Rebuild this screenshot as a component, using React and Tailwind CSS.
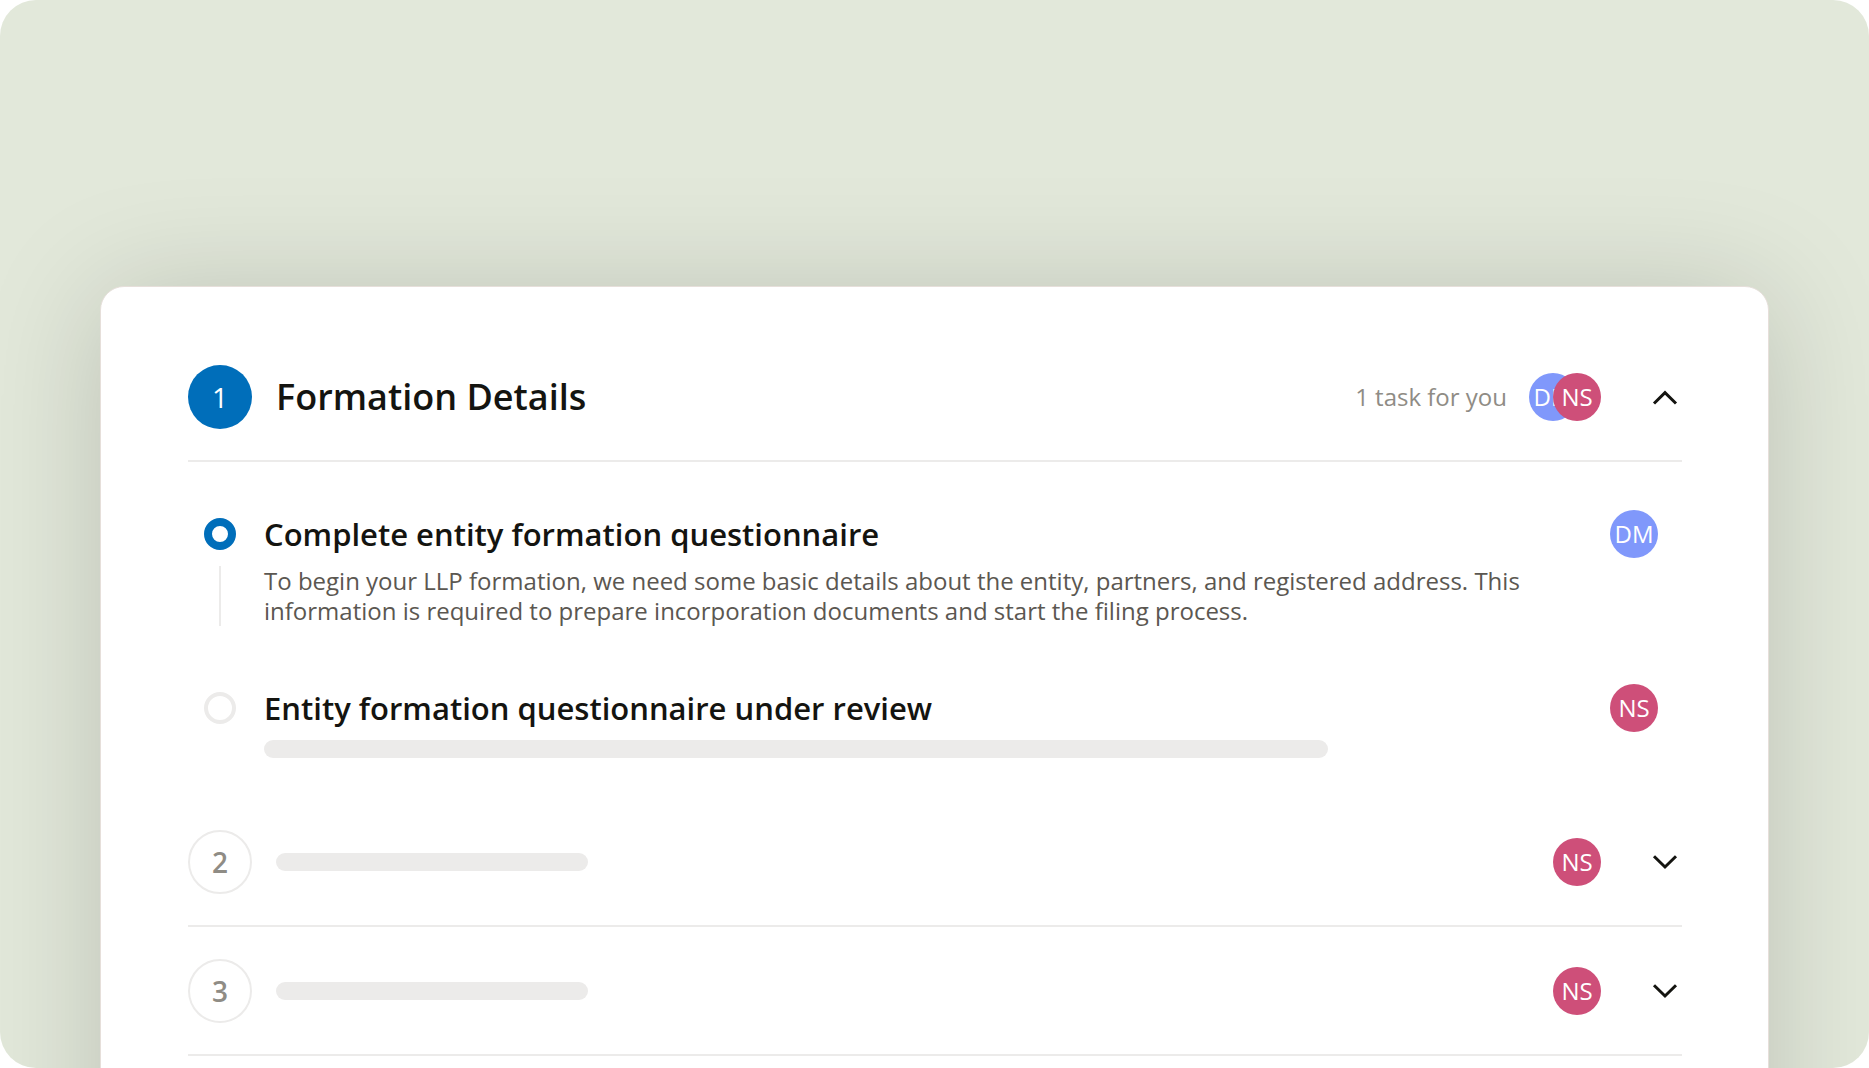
import { useState } from "react";

const people = {
  DM: "bg-[#8098fb]",
  NS: "bg-[#ce4f79]",
};

const tasks = [
  {
    id: "questionnaire",
    title: "Complete entity formation questionnaire",
    description:
      "To begin your LLP formation, we need some basic details about the entity, partners, and registered address. This information is required to prepare incorporation documents and start the filing process.",
    assignee: "DM",
  },
  {
    id: "review",
    title: "Entity formation questionnaire under review",
    assignee: "NS",
  },
];

const upcoming = [
  { number: 2, assignee: "NS" },
  { number: 3, assignee: "NS" },
];

function Avatar({ initials, className = "" }) {
  return (
    <span
      className={`flex size-12 shrink-0 items-center justify-center rounded-full text-2xl leading-none text-white ${people[initials]} ${className}`}
    >
      {initials}
    </span>
  );
}

function ToggleButton({ open, label, onClick }) {
  return (
    <button
      type="button"
      onClick={onClick}
      aria-expanded={open}
      aria-label={label}
      className="mr-px ml-12 size-8 shrink-0 cursor-pointer"
    >
      <svg viewBox="0 0 32 32" className="size-8" fill="none" stroke="#141410" strokeWidth="3">
        {open ? <path d="M5 22.5 L16 11.7 L27 22.5" /> : <path d="M5 10.2 L16 21 L27 10.2" />}
      </svg>
    </button>
  );
}

function Task({ task, checked, onSelect }) {
  return (
    <li className="flex pl-4">
      <div className="flex w-8 shrink-0 flex-col items-center">
        <input
          type="radio"
          id={task.id}
          name="task"
          checked={checked}
          onChange={onSelect}
          className="mt-2 size-8 shrink-0 cursor-pointer appearance-none rounded-full border-4 border-[#ecebea] bg-white checked:border-8 checked:border-[#006eba]"
        />
        {task.description && <span className="mt-4 h-[60px] w-[2px] bg-[#ecebea]" />}
      </div>
      <div className="ml-7 min-w-0 flex-1">
        <div className="flex h-12 items-center justify-between pr-6">
          <label htmlFor={task.id} className="cursor-pointer text-[31px] leading-10 font-semibold text-[#141410]">
            {task.title}
          </label>
          <Avatar initials={task.assignee} />
        </div>
        {task.description ? (
          <p className="mt-2 max-w-[1280px] text-2xl leading-[30px] text-[#5b5751]">{task.description}</p>
        ) : (
          <div className="mt-2 h-[18px] max-w-[1064px] rounded-full bg-[#ecebea]" />
        )}
      </div>
    </li>
  );
}

export default function App() {
  const [open, setOpen] = useState(true);
  const [current, setCurrent] = useState("questionnaire");

  return (
    <div className="h-screen bg-white font-['Open_Sans',sans-serif]">
      <main className="h-full overflow-hidden rounded-[36px] bg-[#e2e8da] px-[100px] pt-[286px]">
        <div className="min-h-full rounded-t-3xl border border-[#e6dfda] bg-white pt-[46px] pr-[86px] pb-40 pl-[87px] shadow-[0_8px_120px_rgba(0,0,0,0.17)]">
          <section>
            <header className="flex items-center border-b-2 border-[#ecebea] pt-8 pb-[31px]">
              <span className="flex size-16 shrink-0 items-center justify-center rounded-full bg-[#006eba] text-[28px] leading-none text-white">
                1
              </span>
              <h2 className="ml-6 flex-1 text-4xl font-semibold text-[#141410]">Formation Details</h2>
              <p className="mr-[22px] text-2xl text-[#8f8c85]">1 task for you</p>
              <div className="flex">
                <Avatar initials="DM" />
                <Avatar initials="NS" className="-ml-6" />
              </div>
              <ToggleButton open={open} label="Toggle Formation Details" onClick={() => setOpen(!open)} />
            </header>
            {open && (
              <ul className="flex flex-col gap-[58px] pt-12 pb-10">
                {tasks.map((task) => (
                  <Task
                    key={task.id}
                    task={task}
                    checked={current === task.id}
                    onSelect={() => setCurrent(task.id)}
                  />
                ))}
              </ul>
            )}
          </section>

          {upcoming.map((step) => (
            <section key={step.number} className="flex items-center border-b-2 border-[#ecebea] pt-8 pb-[31px]">
              <span className="flex size-16 shrink-0 items-center justify-center rounded-full border-2 border-[#ecebea] text-[28px] leading-none font-semibold text-[#8f8c85]">
                {step.number}
              </span>
              <div className="ml-6 h-[18px] w-[312px] rounded-full bg-[#ecebea]" />
              <Avatar initials={step.assignee} className="ml-auto" />
              <ToggleButton open={false} label={`Open step ${step.number}`} />
            </section>
          ))}
        </div>
      </main>
    </div>
  );
}
